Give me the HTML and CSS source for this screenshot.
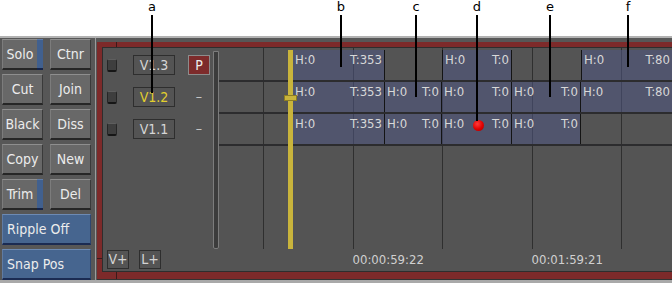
FILE: index.html
```html
<!DOCTYPE html>
<html lang="en">
<head>
  <meta charset="UTF-8">
  <title>Timeline</title>
  <link rel="stylesheet" href="styles.css">
</head>
<body>
  <div class="page">

    <!-- Callouts -->
    <div class="callout co-a"><span>a</span><i></i></div>
    <div class="callout co-b"><span>b</span><i></i></div>
    <div class="callout co-c"><span>c</span><i></i></div>
    <div class="callout co-d"><span>d</span><i></i></div>
    <div class="callout co-e"><span>e</span><i></i></div>
    <div class="callout co-f"><span>f</span><i></i></div>

    <div class="topspace"></div>

    <div class="app">
      <!-- Edit buttons -->
      <div class="tools">
        <button class="btn toggle"><span>Solo</span><b></b></button>
        <button class="btn">Ctnr</button>
        <button class="btn">Cut</button>
        <button class="btn">Join</button>
        <button class="btn">Black</button>
        <button class="btn">Diss</button>
        <button class="btn">Copy</button>
        <button class="btn">New</button>
        <button class="btn toggle"><span>Trim</span><b></b></button>
        <button class="btn">Del</button>
        <button class="btn wide">Ripple Off</button>
        <button class="btn wide">Snap Pos</button>
      </div>

      <!-- Timeline -->
      <div class="frame">
        <span class="tick tick-top"></span>
        <span class="tick tick-bottom"></span>
        <span class="tick tick-left"></span>
        <div class="panel">
          <div class="heads">
            <div class="head">
              <span class="lock"></span>
              <span class="name">V1.3</span>
              <span class="pri">P</span>
            </div>
            <div class="head">
              <span class="lock"></span>
              <span class="name cur">V1.2</span>
              <span class="dash">–</span>
            </div>
            <div class="head">
              <span class="lock"></span>
              <span class="name">V1.1</span>
              <span class="dash">–</span>
            </div>
          </div>

          <div class="vscroll"></div>

          <div class="timeline">
            <div class="grid">
              <div class="cell first"></div>
              <div class="cell"></div>
              <div class="cell"></div>
              <div class="cell"></div>
              <div class="cell"></div>
              <div class="cell"></div>
              <div class="cell last"></div>
            </div>

            <div class="lanes">
              <div class="lane">
                <div class="clip at2"><span>H:0</span><span>T:353</span></div>
                <div class="clip at4 start"><span>H:0</span><span>T:0</span></div>
                <div class="clip at6 start"><span>H:0</span><span>T:80</span></div>
              </div>
              <div class="lane">
                <div class="clip at2"><span>H:0</span><span>T:353</span></div>
                <div class="clip at3"><span>H:0</span><span>T:0</span></div>
                <div class="clip at4"><span>H:0</span><span>T:0</span></div>
                <div class="clip at5"><span>H:0</span><span>T:0</span></div>
                <div class="clip at6"><span>H:0</span><span>T:80</span></div>
              </div>
              <div class="lane">
                <div class="clip at2"><span>H:0</span><span>T:353</span></div>
                <div class="clip at3"><span>H:0</span><span>T:0</span></div>
                <div class="clip at4"><span>H:0</span><span class="dot"></span><span>T:0</span></div>
                <div class="clip at5"><span>H:0</span><span>T:0</span></div>
              </div>
              <div class="playhead"><span class="knob"></span></div>
            </div>

            <div class="ruler">
              <div class="cell first"></div>
              <div class="cell"></div>
              <div class="cell tc">00:00:59:22</div>
              <div class="cell"></div>
              <div class="cell tc">00:01:59:21</div>
            </div>
          </div>

          <div class="adds">
            <span class="add">V+</span>
            <span class="add">L+</span>
          </div>
        </div>
      </div>
    </div>
  </div>
</body>
</html>
```

FILE: styles.css
```css
body {
  margin: 0;
  background: #ffffff;
  font-family: "DejaVu Sans Condensed", "DejaVu Sans", sans-serif;
  font-stretch: condensed;
  overflow: hidden;
}

.page {
  position: relative;
  width: 672px;
  height: 283px;
  overflow: hidden;
}

.topspace {
  height: 36px;
}

/* callout letters + leader lines */
.callout {
  position: absolute;
  top: 0;
  z-index: 5;
  width: 12px;
  margin-left: -6px;
  display: flex;
  flex-direction: column;
  align-items: center;
  font-family: "DejaVu Sans", sans-serif;
  font-stretch: normal;
  font-size: 13px;
  line-height: 13px;
  color: #000;
}

.callout i {
  display: block;
  width: 2px;
  margin-top: 2px;
  background: #000;
}

.co-a { left: 152px; }
.co-a i { height: 78px; }
.co-b { left: 341px; }
.co-b i { height: 52px; }
.co-c { left: 416px; }
.co-c i { height: 82px; }
.co-d { left: 477px; }
.co-d i { height: 106px; }
.co-e { left: 550px; }
.co-e i { height: 82px; }
.co-f { left: 628px; }
.co-f i { height: 52px; }

.app {
  display: flex;
  height: 247px;
  box-sizing: border-box;
  border-top: 2px solid #b2b2b2;
  border-bottom: 3px solid #a9a9a9;
  background: #575757;
}

/* left buttons */
.tools {
  flex: 0 0 96px;
  box-sizing: border-box;
  display: grid;
  grid-template-columns: 41px 41px;
  grid-auto-rows: 31px;
  column-gap: 7px;
  row-gap: 4px;
  align-content: start;
  padding: 1px 0 0 2px;
  border-right: 1px solid #9c9c9c;
}

.btn {
  box-sizing: border-box;
  display: flex;
  align-items: center;
  justify-content: center;
  padding: 0;
  font-family: "DejaVu Sans Condensed", "DejaVu Sans", sans-serif;
  font-stretch: condensed;
  font-size: 14px;
  color: #ececec;
  background: #686868;
  border: 1px solid;
  border-bottom-width: 2px;
  border-color: #8e8e8e #3a3a3a #262626 #7c7c7c;
}

.btn.toggle span {
  flex: 1;
  text-align: center;
}

.btn.toggle b {
  align-self: stretch;
  width: 6px;
  margin: -1px -1px -2px 0;
  background: #41608e;
  border-top: 1px solid #5f7ca8;
  border-bottom: 2px solid #15244a;
}

.btn.wide {
  grid-column: 1 / span 2;
  justify-content: flex-start;
  padding-left: 4px;
  background: #46658f;
  border-color: #6d8ab3 #2e4670 #1b2b52 #5f7ba3;
}

/* red framed timeline */
.frame {
  position: relative;
  box-sizing: border-box;
  flex: 0 0 575px;
  margin: 4px 0 1px 1px;
  border: solid #7d2a2a;
  border-width: 5px 0 7px 5px;
  box-shadow: 0 1px 0 #333;
}

.tick {
  position: absolute;
  background: #3a1a1a;
}

.tick-top { left: 14px; top: -5px; width: 1px; height: 5px; }
.tick-bottom { left: 14px; bottom: -7px; width: 1px; height: 7px; }
.tick-left { left: -5px; top: 211px; width: 5px; height: 1px; }

.panel {
  box-sizing: border-box;
  height: 100%;
  display: grid;
  grid-template-columns: 110px 6px minmax(0, 1fr);
  grid-template-rows: 201px 22px;
  background: #545454;
  border: 1px solid #2e2e2e;
  border-right: 0;
}

/* track headers */
.heads {
  padding-top: 2px;
}

.head {
  display: flex;
  align-items: center;
  height: 30px;
  margin-bottom: 2px;
  padding-left: 4px;
}

.lock {
  box-sizing: border-box;
  width: 10px;
  height: 13px;
  margin-right: 16px;
  background: #3e3e3e;
  border: 1px solid #262626;
  border-top-color: #5e5e5e;
  border-bottom: 2px solid #161616;
  border-radius: 2px;
}

.name {
  box-sizing: border-box;
  width: 42px;
  height: 20px;
  margin-right: 13px;
  border: 1px solid #2e2e2e;
  font-size: 14px;
  line-height: 18px;
  text-align: center;
  color: #d6d6d6;
}

.name.cur {
  color: #e2cf2e;
}

.pri,
.dash {
  box-sizing: border-box;
  width: 22px;
  height: 20px;
  font-size: 14px;
  line-height: 18px;
  text-align: center;
  color: #c4c4c4;
}

.pri {
  background: #7d2b2b;
  border: 1px solid #8c8c8c;
  color: #ececec;
}

.vscroll {
  margin-top: 3px;
  background: #3c3c3c;
  border: 1px solid #7c7c7c;
  border-radius: 0 0 2px 2px;
}

/* timeline body */
.timeline {
  grid-column: 3;
  grid-row: 1 / span 2;
  display: grid;
  grid-template-columns: minmax(0, 1fr);
  grid-template-rows: 201px 22px;
  overflow: hidden;
}

.grid,
.lanes {
  grid-area: 1 / 1;
}

.grid,
.ruler {
  display: flex;
}

.cell {
  box-sizing: border-box;
  flex: 0 0 89.5px;
}

.grid .cell {
  border-left: 1px solid #2f2f2f;
}

.cell.first {
  flex-basis: 44px;
}

.grid .cell.first {
  border-left: 0;
}

.cell.last {
  flex: 1;
}

.lanes {
  position: relative;
  padding-top: 2px;
}

.lane {
  display: grid;
  grid-template-columns: 74px 92px 57px 70px 69px minmax(0, 1fr);
  height: 30px;
  border-bottom: 2px solid #2c2c2e;
}

.clip {
  box-sizing: border-box;
  grid-row: 1;
  display: flex;
  justify-content: space-between;
  padding: 3px 2px 0;
  font-size: 13px;
  line-height: 13px;
  color: #d8d8d8;
  background: rgba(78, 86, 128, 0.56);
  border-right: 1px solid #141414;
}

.clip.start {
  border-left: 1px solid #141414;
}

.at2 { grid-column: 2; }
.at3 { grid-column: 3; }
.at4 { grid-column: 4; }
.at5 { grid-column: 5; }
.at6 { grid-column: 6; border-right: 0; }

.dot {
  width: 11px;
  height: 11px;
  margin-top: 3px;
  border-radius: 50%;
  background: radial-gradient(circle at 40% 35%, #ff3a3a, #e00000 55%, #a00000);
}

.playhead {
  position: absolute;
  left: 69px;
  top: 2px;
  bottom: 0;
  width: 5px;
  background: #c9b43c;
}

.knob {
  position: absolute;
  top: 45px;
  left: -4px;
  width: 13px;
  height: 6px;
  box-sizing: border-box;
  background: #c9b43c;
  border: 1px solid #8d7d22;
}

.ruler {
  grid-row: 2;
}

.tc {
  padding-top: 4px;
  font-size: 13px;
  line-height: 13px;
  color: #d0d0d0;
  white-space: nowrap;
}

.adds {
  grid-column: 1;
  grid-row: 2;
  display: flex;
  gap: 10px;
  padding: 1px 0 0 4px;
}

.add {
  box-sizing: border-box;
  width: 22px;
  height: 19px;
  border: 1px solid #2e2e2e;
  font-size: 14px;
  line-height: 17px;
  text-align: center;
  color: #d4d4d4;
}
```
